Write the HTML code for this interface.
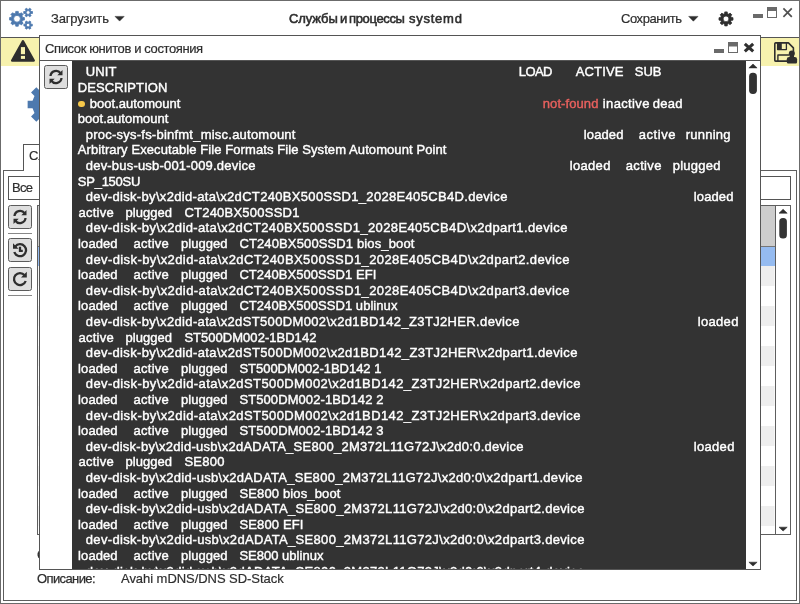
<!DOCTYPE html>
<html lang="ru">
<head>
<meta charset="utf-8">
<title>Службы и процессы systemd</title>
<style>
*{box-sizing:border-box;margin:0;padding:0}
html,body{width:800px;height:604px;overflow:hidden;background:#fff}
body{font-family:"Liberation Sans",sans-serif;font-size:13px;color:#2e2e2e;position:relative}
.abs{position:absolute}
.f{position:absolute;white-space:pre;line-height:16px;font-size:13px;will-change:transform;-webkit-text-stroke:0.2px #2e2e2e}
#win{position:absolute;left:0;top:0;width:800px;height:604px;background:#fff;overflow:hidden}
#hdr{position:absolute;left:0;top:0;width:800px;height:38px;border-bottom:1px solid #555;background:#fff}
.htxt{position:absolute;top:10px;line-height:16px;font-size:13px;white-space:pre;color:#2e2e2e}
.tri{position:absolute;width:0;height:0;border-left:4.9px solid transparent;border-right:4.9px solid transparent;border-top:5.3px solid #2e2e2e}
.yel{position:absolute;background:#f7f2ae}
.btn{position:absolute;width:24px;height:24px;border:1px solid #5c5c5c;border-radius:2.5px;background:#dedede}
.btn svg{position:absolute;left:3px;top:3px}
.btn svg path[fill=none]{stroke-width:2.3}
.line{position:absolute;background:#555}
#dlg{position:absolute;left:39px;top:35px;width:722px;height:535px;border:1px solid #555;background:#fff;overflow:hidden}
#dttl{position:absolute;left:0;top:0;width:720px;height:25px;border-bottom:1px solid #555;background:#fff}
#con{position:absolute;left:32px;top:25px;width:674px;height:508px;background:#333;overflow:hidden;color:#fff;font-size:13px;font-weight:400;-webkit-text-stroke:0.42px}
.t{position:absolute;white-space:pre;line-height:16px;height:16px}
.sb{position:absolute;background:#fff;border-left:1px solid #555}
.thumb{position:absolute;background:#333;border-radius:4px}
.up{position:absolute;width:0;height:0;border-left:5px solid transparent;border-right:5px solid transparent;border-bottom:5px solid #2e2e2e}
.dn{position:absolute;width:0;height:0;border-left:5px solid transparent;border-right:5px solid transparent;border-top:5px solid #2e2e2e}
</style>
</head>
<body>
<div id="win">
<!-- main window content behind dialog -->
<div class="abs" style="left:0;top:0;width:800px;height:604px">
  <!-- yellow info bars -->
  <div class="yel" style="left:0;top:38px;width:40px;height:28px"></div>
  <div class="yel" style="left:760px;top:38px;width:40px;height:28px"></div>
  <!-- warning icon -->
  <svg class="abs" style="left:10px;top:39px" width="26" height="25" viewBox="10 39 26 25"><path d="M22.95 41.4 L33.7 60.5 H12.2 Z" fill="#2e2e2e" stroke="#2e2e2e" stroke-width="2.5" stroke-linejoin="round"/><rect x="20.9" y="47.1" width="4.1" height="7.1" fill="#f7f2ae"/><rect x="20.9" y="55.9" width="4.1" height="3" fill="#f7f2ae"/></svg>
  <!-- save icon -->
  <svg class="abs" style="left:770px;top:39px" width="30" height="27" viewBox="770 39 30 27">
    <path d="M775.6 42.9 H788.4 L793.4 47.9 V53 M787.5 61.1 H775.6 Q774.8 61.1 774.8 60.3 V43.7 Q774.8 42.9 775.6 42.9" fill="none" stroke="#2e2e2e" stroke-width="1.6" stroke-linejoin="round" stroke-linecap="round"/>
    <path d="M777.6 43 V49.6 H786.4 V43" fill="none" stroke="#2e2e2e" stroke-width="1.3" stroke-linejoin="round"/>
    <rect x="777.3" y="42.6" width="4.5" height="7" fill="#2e2e2e"/>
    <path d="M777.9 61 V55 H789" fill="none" stroke="#2e2e2e" stroke-width="1.4" stroke-linejoin="round"/>
    <circle cx="791.8" cy="53.5" r="3" fill="#2e2e2e"/>
    <path d="M788.3 63.6 Q786.8 63.6 786.8 62.1 V59.2 Q786.8 56.9 789.1 56.9 H794.8 Q797.1 56.9 797.1 59.2 V62.1 Q797.1 63.6 795.6 63.6 Z" fill="#2e2e2e"/><rect x="789.6" y="54.5" width="4.4" height="3.5" fill="#2e2e2e"/>
  </svg>
  <!-- big blue gear (partly hidden) -->
  <svg class="abs" style="left:20px;top:80px" width="60" height="50" viewBox="20 80 60 50"><path d="M64.05 100.72 L68.96 100.76 L68.96 108.24 L64.05 108.28 L62.11 112.96 L65.56 116.47 L60.27 121.76 L56.76 118.31 L52.08 120.25 L52.04 125.16 L44.56 125.16 L44.52 120.25 L39.84 118.31 L36.33 121.76 L31.04 116.47 L34.49 112.96 L32.55 108.28 L27.64 108.24 L27.64 100.76 L32.55 100.72 L34.49 96.04 L31.04 92.53 L36.33 87.24 L39.84 90.69 L44.52 88.75 L44.56 83.84 L52.04 83.84 L52.08 88.75 L56.76 90.69 L60.27 87.24 L65.56 92.53 L62.11 96.04 Z M55.30 104.50 A7 7 0 1 0 41.30 104.50 A7 7 0 1 0 55.30 104.50 Z" fill="#4d79ae" fill-rule="evenodd"/></svg>
  <!-- tab -->
  <div class="abs" style="left:23px;top:144px;width:60px;height:27px;border:1px solid #555;border-bottom:none;background:#fff"></div>
  <div class="f" style="left:29px;top:148px">Службы</div>
  <!-- notebook frame -->
  <div class="abs" style="left:3px;top:170px;width:794px;height:431px;border:1px solid #5e5e5e"></div>
  <div class="abs" style="left:24px;top:170px;width:58px;height:1px;background:#fff"></div>
  <!-- filter combo -->
  <div class="abs" style="left:8px;top:176px;width:783px;height:24px;border:1px solid #555;background:#fff"></div>
  <span class="f" style="left:12.0px;top:180px;letter-spacing:-0.653px">Все</span>
  <!-- side buttons -->
  <div class="btn" style="left:8px;top:205px"><svg width="16" height="16" viewBox="0 0 16 16"><path d="M2.5 7 A5.6 5.6 0 0 1 12.6 4.2 M13.5 9 A5.6 5.6 0 0 1 3.4 11.8" fill="none" stroke="#2e2e2e" stroke-width="2"/><path d="M14.5 1 V6.2 H9.3 Z M1.5 15 V9.8 H6.7 Z" fill="#2e2e2e"/></svg></div>
  <div class="line" style="left:8px;top:233px;width:24px;height:1px;background:#888"></div>
  <div class="btn" style="left:8px;top:238px"><svg width="16" height="16" viewBox="0 0 16 16"><path d="M3.2 4.6 A6 6 0 1 1 2.3 10" fill="none" stroke="#2e2e2e" stroke-width="2"/><path d="M1 1.2 V6.8 H6.6 Z" fill="#2e2e2e"/><path d="M8 4.8 V8.8 H10.8" fill="none" stroke="#2e2e2e" stroke-width="1.6"/></svg></div>
  <div class="btn" style="left:8px;top:267px"><svg width="16" height="16" viewBox="0 0 16 16"><path d="M12.6 4.2 A6 6 0 1 0 13.7 10" fill="none" stroke="#2e2e2e" stroke-width="2"/><path d="M14.8 0.8 V6.6 H9 Z" fill="#2e2e2e"/></svg></div>
  <div class="line" style="left:8px;top:295px;width:24px;height:1px;background:#888"></div>
  <!-- table -->
  <svg class="abs" style="left:0;top:200px" width="800" height="340" viewBox="0 0 800 340"><g transform="translate(0,-200)">
    <rect x="37.5" y="205.5" width="753" height="329" fill="#fff" stroke="#5e5e5e"/>
    <rect x="38" y="206" width="737" height="40" fill="#cdcdcd"/>
    <rect x="38" y="246" width="737" height="1" fill="#777"/>
    <rect x="38" y="247" width="737" height="19" fill="#95bbf0"/>
    <rect x="38.5" y="266" width="736" height="20" fill="#eeeeee"/><rect x="38.5" y="306" width="736" height="20" fill="#eeeeee"/><rect x="38.5" y="346" width="736" height="20" fill="#eeeeee"/><rect x="38.5" y="386" width="736" height="20" fill="#eeeeee"/><rect x="38.5" y="426" width="736" height="20" fill="#eeeeee"/><rect x="38.5" y="466" width="736" height="20" fill="#eeeeee"/><rect x="38.5" y="506" width="736" height="20" fill="#eeeeee"/>
    <rect x="775" y="206" width="1" height="328" fill="#5e5e5e"/>
    <path d="M779 213.2 L783.1 209.3 L787.2 213.2 Z" fill="#2e2e2e" stroke="#2e2e2e" stroke-width="0.6" stroke-linejoin="round"/>
    <rect x="779.3" y="218" width="7.6" height="20.6" rx="3.6" fill="#333"/>
    <path d="M779 527.2 L787.2 527.2 L783.1 531 Z" fill="#2e2e2e" stroke="#2e2e2e" stroke-width="0.6" stroke-linejoin="round"/>
  </g></svg>
  <!-- description row -->
  <span class="f" style="left:36.9px;top:571.3px;-webkit-text-stroke:0.25px #2e2e2e;letter-spacing:-0.605px">Описание:</span>
  <div class="f" style="left:37px;top:547px;-webkit-text-stroke:0.25px #2e2e2e">Состояние:</div>
  <span class="f" style="left:121.4px;top:571.3px;letter-spacing:-0.050px">Avahi mDNS/DNS SD-Stack</span>
</div>

<!-- header bar -->
<div id="hdr">
  <svg class="abs" style="left:0;top:0" width="800" height="37" viewBox="0 0 800 37">
    <g fill="#4d79ae" fill-rule="evenodd" stroke="#4d79ae" stroke-width="0.8" stroke-linejoin="round"><path d="M18.35 24.44 L18.27 26.19 L15.73 26.19 L15.65 24.44 L13.97 23.75 L12.67 24.92 L10.88 23.13 L12.05 21.83 L11.36 20.15 L9.61 20.07 L9.61 17.53 L11.36 17.45 L12.05 15.77 L10.88 14.47 L12.67 12.68 L13.97 13.85 L15.65 13.16 L15.73 11.41 L18.27 11.41 L18.35 13.16 L20.03 13.85 L21.33 12.68 L23.12 14.47 L21.95 15.77 L22.64 17.45 L24.39 17.53 L24.39 20.07 L22.64 20.15 L21.95 21.83 L23.12 23.13 L21.33 24.92 L20.03 23.75 Z M20.40 18.80 A3.4 3.4 0 1 0 13.60 18.80 A3.4 3.4 0 1 0 20.40 18.80 Z"/><path d="M31.05 11.54 L32.49 11.49 L32.49 13.51 L31.05 13.46 L30.40 14.57 L31.17 15.79 L29.42 16.80 L28.74 15.53 L27.46 15.53 L26.78 16.80 L25.03 15.79 L25.80 14.57 L25.15 13.46 L23.71 13.51 L23.71 11.49 L25.15 11.54 L25.80 10.43 L25.03 9.21 L26.78 8.20 L27.46 9.47 L28.74 9.47 L29.42 8.20 L31.17 9.21 L30.40 10.43 Z M30.00 12.50 A1.9 1.9 0 1 0 26.20 12.50 A1.9 1.9 0 1 0 30.00 12.50 Z"/><path d="M30.95 24.17 L32.29 24.14 L32.29 26.06 L30.95 26.03 L30.33 27.11 L31.03 28.25 L29.36 29.21 L28.72 28.03 L27.48 28.03 L26.84 29.21 L25.17 28.25 L25.87 27.11 L25.25 26.03 L23.91 26.06 L23.91 24.14 L25.25 24.17 L25.87 23.09 L25.17 21.95 L26.84 20.99 L27.48 22.17 L28.72 22.17 L29.36 20.99 L31.03 21.95 L30.33 23.09 Z M29.90 25.10 A1.8 1.8 0 1 0 26.30 25.10 A1.8 1.8 0 1 0 29.90 25.10 Z"/></g>
    <path d="M727.33 24.24 L727.24 25.89 L724.76 25.89 L724.67 24.24 L723.16 23.61 L721.93 24.72 L720.18 22.97 L721.29 21.74 L720.66 20.23 L719.01 20.14 L719.01 17.66 L720.66 17.57 L721.29 16.06 L720.18 14.83 L721.93 13.08 L723.16 14.19 L724.67 13.56 L724.76 11.91 L727.24 11.91 L727.33 13.56 L728.84 14.19 L730.07 13.08 L731.82 14.83 L730.71 16.06 L731.34 17.57 L732.99 17.66 L732.99 20.14 L731.34 20.23 L730.71 21.74 L731.82 22.97 L730.07 24.72 L728.84 23.61 Z M728.90 18.90 A2.9 2.9 0 1 0 723.10 18.90 A2.9 2.9 0 1 0 728.90 18.90 Z" fill="#2e2e2e" fill-rule="evenodd" stroke="#2e2e2e" stroke-width="0.8" stroke-linejoin="round"/>
    <path d="M115 16.4 H124.2 L119.6 21.1 Z M688.7 16.4 H698 L693.35 21.2 Z" fill="#2e2e2e" stroke="#2e2e2e" stroke-width="0.5" stroke-linejoin="round"/>
    <rect x="753" y="14" width="10" height="4" fill="#6a6a6a"/>
    <rect x="767.5" y="7.5" width="9" height="10" fill="#fff" stroke="#6a6a6a" stroke-width="1"/><rect x="767" y="7" width="10" height="4" fill="#6a6a6a"/>
    <path d="M783.4 8.4 L791.8 16.8 M791.8 8.4 L783.4 16.8" stroke="#505050" stroke-width="1.7" fill="none"/>
  </svg>
  <span class="f" style="left:50.9px;top:10.5px;letter-spacing:-0.182px">Загрузить</span>
  <span class="f" style="left:288.9px;top:10.5px;-webkit-text-stroke:0.55px #2e2e2e;letter-spacing:-0.093px">Службы</span><span class="f" style="left:340.0px;top:10.5px;-webkit-text-stroke:0.55px #2e2e2e;letter-spacing:-0.266px">и</span><span class="f" style="left:349.4px;top:10.5px;-webkit-text-stroke:0.55px #2e2e2e;letter-spacing:-0.354px">процессы</span><span class="f" style="left:409.4px;top:10.5px;-webkit-text-stroke:0.55px #2e2e2e;letter-spacing:0.749px">systemd</span>
  <span class="f" style="left:621.1px;top:10.5px;letter-spacing:-0.432px">Сохранить</span>
  </div>

<!-- dialog -->
<div id="dlg">
  <div id="dttl">
    <span class="f" style="left:4.9px;top:4.5px;letter-spacing:-0.386px">Список юнитов и состояния</span>
    <svg class="abs" style="left:0;top:0" width="720" height="24" viewBox="40 36 720 24">
      <rect x="714" y="49" width="10" height="4" fill="#6a6a6a"/>
      <rect x="728.5" y="42.5" width="9" height="10" fill="#fff" stroke="#6a6a6a" stroke-width="1"/><rect x="728" y="42" width="10" height="4.5" fill="#6a6a6a"/>
      <path d="M744.8 43.8 L753.2 51.3 M753.2 43.8 L744.8 51.3" stroke="#303030" stroke-width="3.1" fill="none"/>
    </svg>
  </div>
  <div class="btn" style="left:4px;top:29px;height:24px"><svg width="16" height="16" viewBox="0 0 16 16"><path d="M2.5 7 A5.6 5.6 0 0 1 12.6 4.2 M13.5 9 A5.6 5.6 0 0 1 3.4 11.8" fill="none" stroke="#2e2e2e" stroke-width="2"/><path d="M14.5 1 V6.2 H9.3 Z M1.5 15 V9.8 H6.7 Z" fill="#2e2e2e"/></svg></div>
  <div id="con">
    <div class="abs" style="left:6.2px;top:39.7px;width:6.8px;height:6.8px;border-radius:3.4px;background:#f6c84a"></div>
<div id="txt" style="position:absolute;left:0;top:0;width:674px;height:508px;will-change:transform">
<span class="t" style="left:13.8px;top:3.0px;letter-spacing:0.085px;">UNIT</span>
<span class="t" style="left:446.8px;top:3.0px;letter-spacing:-0.602px;">LOAD</span>
<span class="t" style="left:503.8px;top:3.0px;letter-spacing:0.126px;">ACTIVE</span>
<span class="t" style="left:562.8px;top:3.0px;letter-spacing:-0.067px;">SUB</span>
<span class="t" style="left:5.8px;top:19.0px;letter-spacing:0.076px;">DESCRIPTION</span>
<span class="t" style="left:17.8px;top:35.0px;letter-spacing:0.019px;">boot.automount</span>
<span class="t" style="left:470.8px;top:35.0px;letter-spacing:0.083px;color:#e8615e;">not-found</span>
<span class="t" style="left:530.8px;top:35.0px;letter-spacing:0.360px;">inactive</span>
<span class="t" style="left:580.8px;top:35.0px;letter-spacing:0.226px;">dead</span>
<span class="t" style="left:5.8px;top:50.0px;letter-spacing:0.019px;">boot.automount</span>
<span class="t" style="left:13.8px;top:66.0px;letter-spacing:0.229px;">proc-sys-fs-binfmt_misc.automount</span>
<span class="t" style="left:511.8px;top:66.0px;letter-spacing:0.111px;">loaded</span>
<span class="t" style="left:566.8px;top:66.0px;letter-spacing:0.526px;">active</span>
<span class="t" style="left:613.8px;top:66.0px;letter-spacing:0.204px;">running</span>
<span class="t" style="left:5.8px;top:81.0px;letter-spacing:0.086px;">Arbitrary Executable File Formats File System Automount Point</span>
<span class="t" style="left:13.8px;top:97.0px;letter-spacing:0.193px;">dev-bus-usb-001-009.device</span>
<span class="t" style="left:497.8px;top:97.0px;letter-spacing:0.311px;">loaded</span>
<span class="t" style="left:553.8px;top:97.0px;letter-spacing:0.326px;">active</span>
<span class="t" style="left:600.8px;top:97.0px;letter-spacing:0.220px;">plugged</span>
<span class="t" style="left:5.8px;top:113.0px;letter-spacing:-0.247px;">SP_150SU</span>
<span class="t" style="left:13.8px;top:128.0px;letter-spacing:0.329px;">dev-disk-by\x2did-ata\x2dCT240BX500SSD1_2028E405CB4D.device</span>
<span class="t" style="left:621.8px;top:128.0px;letter-spacing:0.111px;">loaded</span>
<span class="t" style="left:6.4px;top:144.0px;letter-spacing:0.266px;">active</span>
<span class="t" style="left:53.6px;top:144.0px;letter-spacing:0.020px;">plugged</span>
<span class="t" style="left:112.4px;top:144.0px;letter-spacing:0.230px;">CT240BX500SSD1</span>
<span class="t" style="left:13.8px;top:159.0px;letter-spacing:0.371px;">dev-disk-by\x2did-ata\x2dCT240BX500SSD1_2028E405CB4D\x2dpart1.device</span>
<span class="t" style="left:6.1px;top:175.0px;letter-spacing:0.091px;">loaded</span>
<span class="t" style="left:61.6px;top:175.0px;letter-spacing:0.246px;">active</span>
<span class="t" style="left:109.1px;top:175.0px;letter-spacing:0.003px;">plugged</span>
<span class="t" style="left:167.4px;top:175.0px;letter-spacing:0.130px;">CT240BX500SSD1 bios_boot</span>
<span class="t" style="left:13.8px;top:191.0px;letter-spacing:0.401px;">dev-disk-by\x2did-ata\x2dCT240BX500SSD1_2028E405CB4D\x2dpart2.device</span>
<span class="t" style="left:6.1px;top:206.0px;letter-spacing:0.091px;">loaded</span>
<span class="t" style="left:61.6px;top:206.0px;letter-spacing:0.246px;">active</span>
<span class="t" style="left:109.1px;top:206.0px;letter-spacing:0.003px;">plugged</span>
<span class="t" style="left:167.4px;top:206.0px;letter-spacing:0.067px;">CT240BX500SSD1 EFI</span>
<span class="t" style="left:13.8px;top:222.0px;letter-spacing:0.401px;">dev-disk-by\x2did-ata\x2dCT240BX500SSD1_2028E405CB4D\x2dpart3.device</span>
<span class="t" style="left:6.1px;top:237.0px;letter-spacing:0.091px;">loaded</span>
<span class="t" style="left:61.6px;top:237.0px;letter-spacing:0.246px;">active</span>
<span class="t" style="left:109.1px;top:237.0px;letter-spacing:0.003px;">plugged</span>
<span class="t" style="left:167.4px;top:237.0px;letter-spacing:0.056px;">CT240BX500SSD1 ublinux</span>
<span class="t" style="left:13.8px;top:253.0px;letter-spacing:0.350px;">dev-disk-by\x2did-ata\x2dST500DM002\x2d1BD142_Z3TJ2HER.device</span>
<span class="t" style="left:625.8px;top:253.0px;letter-spacing:0.311px;">loaded</span>
<span class="t" style="left:6.4px;top:269.0px;letter-spacing:0.266px;">active</span>
<span class="t" style="left:53.6px;top:269.0px;letter-spacing:0.020px;">plugged</span>
<span class="t" style="left:112.4px;top:269.0px;letter-spacing:0.029px;">ST500DM002-1BD142</span>
<span class="t" style="left:13.8px;top:284.0px;letter-spacing:0.359px;">dev-disk-by\x2did-ata\x2dST500DM002\x2d1BD142_Z3TJ2HER\x2dpart1.device</span>
<span class="t" style="left:6.1px;top:300.0px;letter-spacing:0.091px;">loaded</span>
<span class="t" style="left:61.6px;top:300.0px;letter-spacing:0.246px;">active</span>
<span class="t" style="left:109.1px;top:300.0px;letter-spacing:0.003px;">plugged</span>
<span class="t" style="left:167.4px;top:300.0px;letter-spacing:-0.020px;">ST500DM002-1BD142 1</span>
<span class="t" style="left:13.8px;top:315.0px;letter-spacing:0.403px;">dev-disk-by\x2did-ata\x2dST500DM002\x2d1BD142_Z3TJ2HER\x2dpart2.device</span>
<span class="t" style="left:6.1px;top:331.0px;letter-spacing:0.091px;">loaded</span>
<span class="t" style="left:61.6px;top:331.0px;letter-spacing:0.246px;">active</span>
<span class="t" style="left:109.1px;top:331.0px;letter-spacing:0.003px;">plugged</span>
<span class="t" style="left:167.4px;top:331.0px;letter-spacing:0.091px;">ST500DM002-1BD142 2</span>
<span class="t" style="left:13.8px;top:347.0px;letter-spacing:0.403px;">dev-disk-by\x2did-ata\x2dST500DM002\x2d1BD142_Z3TJ2HER\x2dpart3.device</span>
<span class="t" style="left:6.1px;top:362.0px;letter-spacing:0.091px;">loaded</span>
<span class="t" style="left:61.6px;top:362.0px;letter-spacing:0.246px;">active</span>
<span class="t" style="left:109.1px;top:362.0px;letter-spacing:0.003px;">plugged</span>
<span class="t" style="left:167.4px;top:362.0px;letter-spacing:0.091px;">ST500DM002-1BD142 3</span>
<span class="t" style="left:13.8px;top:378.0px;letter-spacing:0.263px;">dev-disk-by\x2did-usb\x2dADATA_SE800_2M372L11G72J\x2d0:0.device</span>
<span class="t" style="left:621.8px;top:378.0px;letter-spacing:0.311px;">loaded</span>
<span class="t" style="left:6.4px;top:393.0px;letter-spacing:0.266px;">active</span>
<span class="t" style="left:53.6px;top:393.0px;letter-spacing:0.020px;">plugged</span>
<span class="t" style="left:112.4px;top:393.0px;letter-spacing:0.238px;">SE800</span>
<span class="t" style="left:13.8px;top:409.0px;letter-spacing:0.297px;">dev-disk-by\x2did-usb\x2dADATA_SE800_2M372L11G72J\x2d0:0\x2dpart1.device</span>
<span class="t" style="left:6.1px;top:425.0px;letter-spacing:0.091px;">loaded</span>
<span class="t" style="left:61.6px;top:425.0px;letter-spacing:0.246px;">active</span>
<span class="t" style="left:109.1px;top:425.0px;letter-spacing:0.003px;">plugged</span>
<span class="t" style="left:167.4px;top:425.0px;letter-spacing:0.141px;">SE800 bios_boot</span>
<span class="t" style="left:13.8px;top:440.0px;letter-spacing:0.325px;">dev-disk-by\x2did-usb\x2dADATA_SE800_2M372L11G72J\x2d0:0\x2dpart2.device</span>
<span class="t" style="left:6.1px;top:456.0px;letter-spacing:0.091px;">loaded</span>
<span class="t" style="left:61.6px;top:456.0px;letter-spacing:0.246px;">active</span>
<span class="t" style="left:109.1px;top:456.0px;letter-spacing:0.003px;">plugged</span>
<span class="t" style="left:167.4px;top:456.0px;letter-spacing:0.141px;">SE800 EFI</span>
<span class="t" style="left:13.8px;top:471.0px;letter-spacing:0.325px;">dev-disk-by\x2did-usb\x2dADATA_SE800_2M372L11G72J\x2d0:0\x2dpart3.device</span>
<span class="t" style="left:6.1px;top:487.0px;letter-spacing:0.091px;">loaded</span>
<span class="t" style="left:61.6px;top:487.0px;letter-spacing:0.246px;">active</span>
<span class="t" style="left:109.1px;top:487.0px;letter-spacing:0.003px;">plugged</span>
<span class="t" style="left:167.4px;top:487.0px;letter-spacing:0.013px;">SE800 ublinux</span>
<span class="t" style="left:13.8px;top:503.0px;letter-spacing:0.325px;">dev-disk-by\x2did-usb\x2dADATA_SE800_2M372L11G72J\x2d0:0\x2dpart4.device</span>
</div>
  </div>
  <svg class="abs" style="left:706px;top:25px" width="14" height="508" viewBox="746 61 14 508">
    <rect x="746" y="61" width="14" height="508" fill="#fff"/>
    <path d="M748.9 67.9 L753 64 L757.1 67.9 Z" fill="#2e2e2e" stroke="#2e2e2e" stroke-width="0.6" stroke-linejoin="round"/>
    <rect x="749.1" y="72.8" width="7.8" height="21.2" rx="3.7" fill="#333"/>
    <path d="M748.9 562.2 L757.1 562.2 L753 566 Z" fill="#2e2e2e" stroke="#2e2e2e" stroke-width="0.6" stroke-linejoin="round"/>
  </svg>
</div>
</div>
<div class="abs" style="left:0;top:0;width:800px;height:604px;border:1px solid #6b6b6b;pointer-events:none"></div>
</div>
</body>
</html>
